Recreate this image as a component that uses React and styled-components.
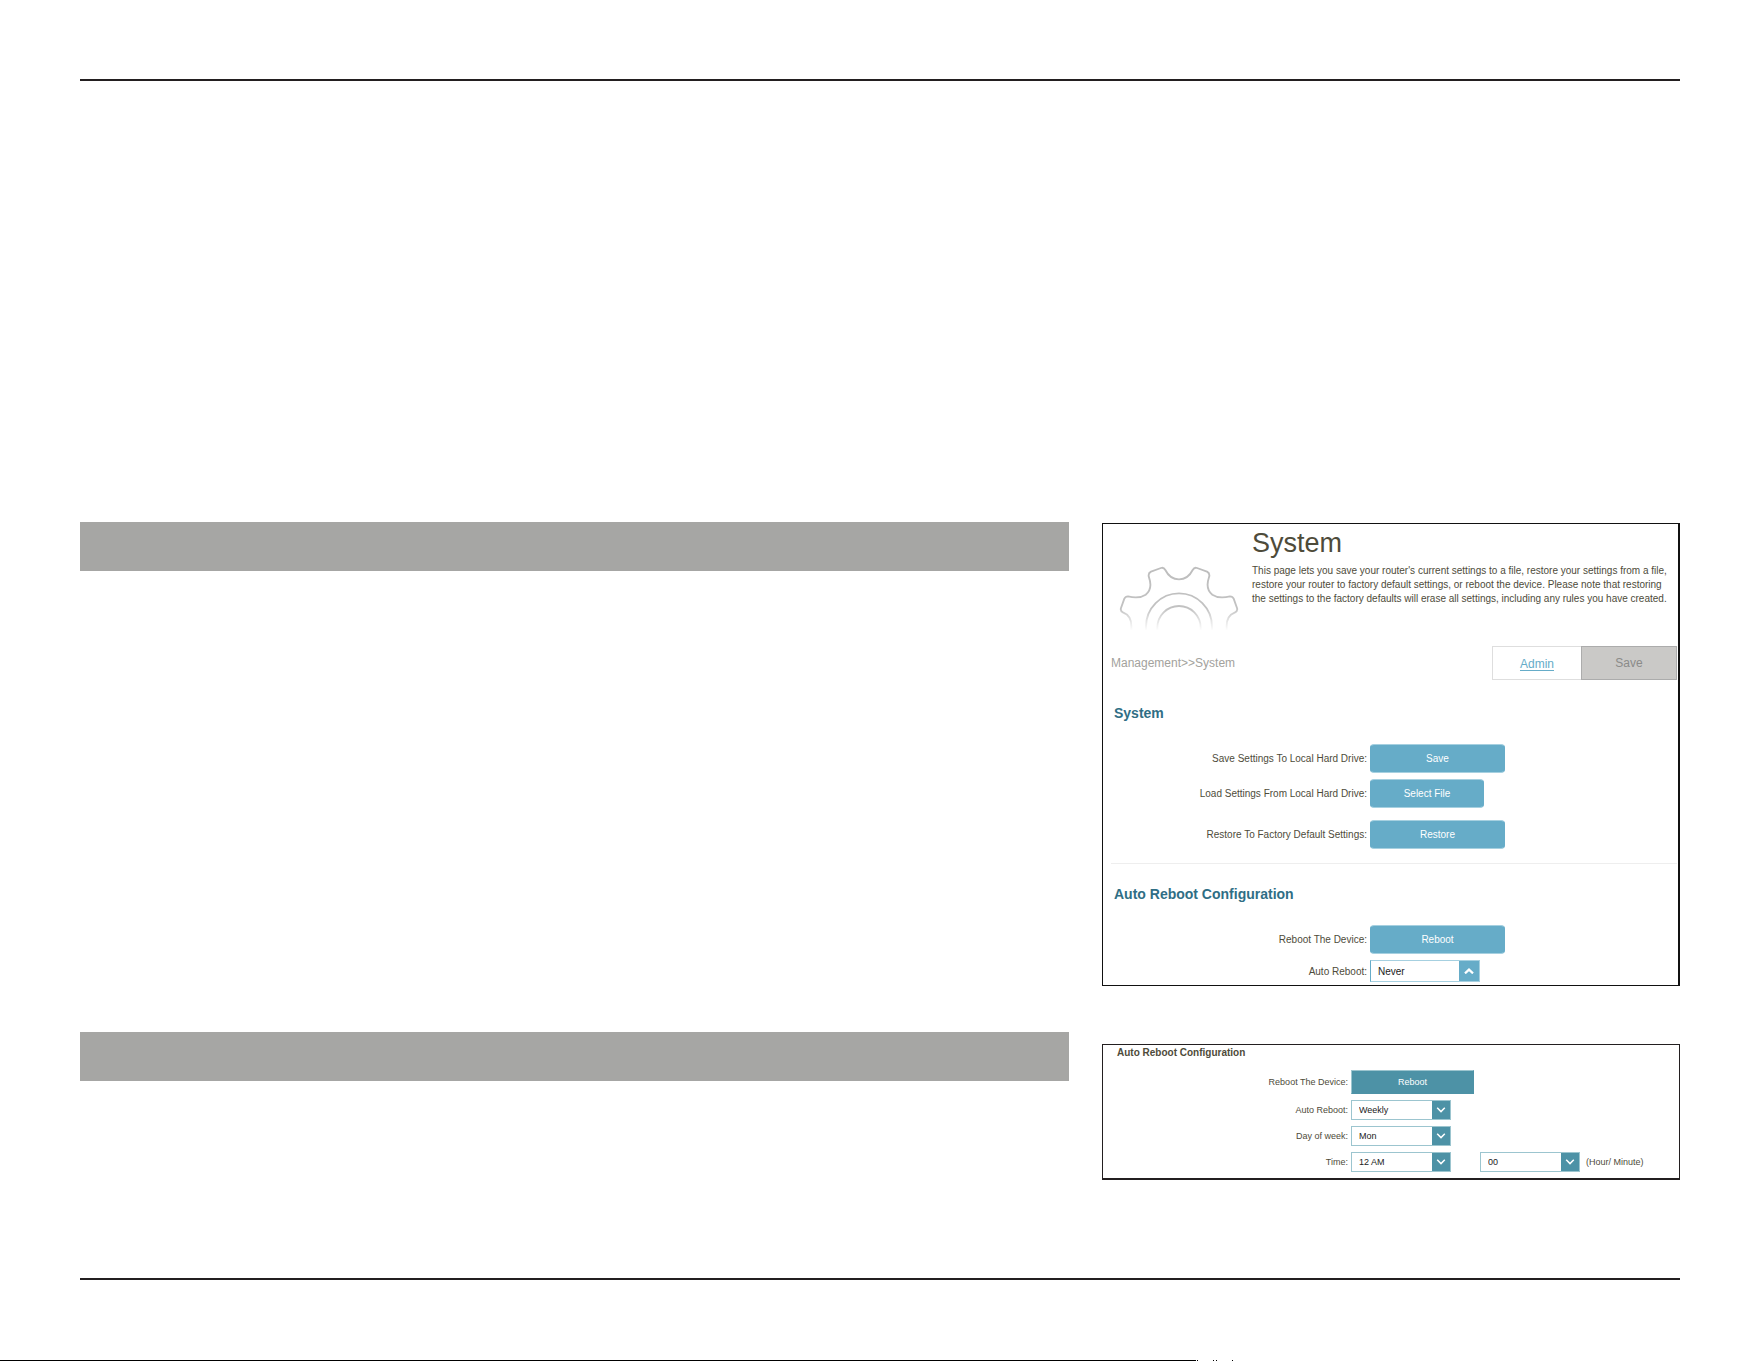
import React from 'react';
import styled, { createGlobalStyle } from 'styled-components';

/* ===== COLORS ===== */
const WHITE = '#FFFFFF';
const INK = '#231F20';
const BAR_GRAY = '#A6A6A4';
const TEXT_OLIVE = '#4E4B3A';
const TEXT_MUTED = '#A3A29D';
const BLUE = '#66ACC8';
const BLUE_LIGHT = '#A6D0E0';
const TEAL = '#4D92A6';
const TEAL_LIGHT = '#9CC5CF';
const TEAL_DARK = '#2F6E85';

const GlobalStyle = createGlobalStyle`
  * {
    box-sizing: border-box;
  }

  body {
    margin: 0;
    background-color: ${WHITE};
    color: ${TEXT_OLIVE};
    font-family: "Liberation Sans", Arial, sans-serif;
  }
`;

/* ===== PAGE ===== */

const Page = styled.div`
  min-height: 100vh;
  display: flex;
  flex-direction: column;
`;

const Sheet = styled.main`
  margin: 79px 81px 0 80px;
  display: flex;
  flex-direction: column;
`;

const Rule = styled.hr`
  width: 100%;
  height: 2px;
  margin: 0;
  border: none;
  background-color: ${INK};
`;

const Content = styled.div`
  display: grid;
  grid-template-columns: 989fr 578fr;
  gap: 46px 33px;
  align-items: start;
  padding: 441px 0 98px;
`;

const SectionBar = styled.div`
  height: 49px;
  background-color: ${BAR_GRAY};
`;

const BottomEdge = styled.div`
  margin-top: auto;
  display: flex;
  height: 1px;
`;

const EdgeLine = styled.div`
  width: 67.9%;
  background-color: #000000;
`;

/* ===== PANELS ===== */

const Panel = styled.section`
  margin-top: ${({ $top }) => $top}px;
  border: 1px solid ${INK};
`;

const SystemPanel = styled(Panel)`
  border-color: #111111;
  border-right-width: 2px;
  padding-bottom: 3px;
`;

const RebootPanel = styled(Panel)`
  border-bottom-width: 2px;
  padding-bottom: 6px;
`;

const Intro = styled.header`
  display: flex;
  height: 122px;
  padding-left: 16px;
`;

const Gear = styled.svg`
  flex: none;
  width: 120px;
  height: 66px;
  margin: 41px 13px 0 0;
`;

const Title = styled.h1`
  margin: 3px 0 5px;
  font-size: 27px;
  line-height: 32px;
  font-weight: 400;
`;

const Description = styled.p`
  margin: 0;
  font-size: 10px;
  line-height: 14px;
  white-space: nowrap;
`;

const Toolbar = styled.div`
  display: flex;
  align-items: center;
  padding: 0 1px 0 8px;
  font-size: 12px;
`;

const Breadcrumb = styled.span`
  margin-right: auto;
  color: ${TEXT_MUTED};
`;

const AdminLink = styled.a`
  width: 89px;
  height: 34px;
  line-height: 34px;
  border: 1px solid #DEDEDE;
  border-right: none;
  color: ${BLUE};
  text-align: center;
  text-underline-offset: 2px;
`;

const SaveButton = styled.button`
  width: 96px;
  height: 34px;
  padding: 0;
  border: 1px solid #ACACAC;
  background-color: #CAC9C7;
  color: #8B8B89;
  font: inherit;
`;

const Heading = styled.h2`
  margin: 0;
  padding: ${({ $top }) => $top}px 0 22px 11px;
  font-size: 14px;
  line-height: 17px;
  color: ${TEAL_DARK};
`;

const SmallHeading = styled.h2`
  margin: 0;
  padding: 2px 0 11px 14px;
  font-size: 10px;
  line-height: 12px;
`;

const Divider = styled.hr`
  height: 1px;
  margin: 14px 1px 0 8px;
  border: none;
  background-color: #EEEEEE;
`;

/* ===== FORM ===== */

const Form = styled.div`
  display: flex;
  flex-direction: column;
  gap: 6px;
  font-size: ${({ $size }) => $size}px;
`;

const Row = styled.div`
  display: grid;
  grid-template-columns: ${({ $columns }) => $columns};
  align-items: center;
`;

const SpacedRow = styled(Row)`
  margin-top: 6px;
`;

const Label = styled.label`
  padding-right: 3px;
  text-align: right;
  white-space: nowrap;
`;

const Field = styled.div`
  display: flex;
  align-items: center;
`;

const BlueButton = styled.button`
  width: ${({ $narrow }) => ($narrow ? 114 : 135)}px;
  height: 29px;
  padding: 0;
  border: 1px solid ${BLUE};
  border-top-color: ${BLUE_LIGHT};
  border-bottom-color: ${BLUE_LIGHT};
  border-radius: 4px;
  background-color: ${BLUE};
  color: ${WHITE};
  font-family: inherit;
  font-size: 10px;
`;

const TealButton = styled.button`
  width: 123px;
  height: 24px;
  padding: 0;
  border: 1px solid ${TEAL};
  border-top-color: ${TEAL_LIGHT};
  border-left-color: ${TEAL_LIGHT};
  background-color: ${TEAL};
  color: ${WHITE};
  font: inherit;
`;

const SelectBox = styled.div`
  position: relative;
  width: ${({ $blue }) => ($blue ? 110 : 100)}px;
  height: ${({ $blue }) => ($blue ? 22 : 20)}px;
  border: 1px solid ${({ $blue }) => ($blue ? BLUE_LIGHT : TEAL_LIGHT)};
  border-left-color: ${({ $blue }) => ($blue ? BLUE : TEAL_LIGHT)};
`;

const NativeSelect = styled.select`
  display: block;
  width: 100%;
  height: 100%;
  padding: 0 24px 0 7px;
  border: none;
  border-radius: 0;
  appearance: none;
  background-color: ${WHITE};
  color: #222222;
  font: inherit;
`;

const Arrow = styled.span`
  position: absolute;
  top: 0;
  right: 0;
  bottom: 0;
  width: ${({ $blue }) => ($blue ? 20 : 18)}px;
  display: flex;
  align-items: center;
  justify-content: center;
  background-color: ${({ $blue }) => ($blue ? BLUE : TEAL)};
  pointer-events: none;
`;

const MinuteField = styled.div`
  display: flex;
  align-items: center;
  gap: 6px;
  margin-left: 29px;
`;

/* ===== COMPONENTS ===== */

const WIDE_COLUMNS = '267fr 308fr';
const SMALL_COLUMNS = '248fr 328fr';

const GearIcon = () => (
  <Gear viewBox="87 165 360 198" fill="none" aria-hidden="true">
    <defs>
      <linearGradient id="gearFade" gradientUnits="userSpaceOnUse" x1="0" y1="170" x2="0" y2="362">
        <stop offset="0" stopColor="#BDBDBD" />
        <stop offset="0.65" stopColor="#C2C2C2" />
        <stop offset="1" stopColor="#FFFFFF" />
      </linearGradient>
    </defs>
    <g stroke="url(#gearFade)" strokeWidth="5.5" strokeLinejoin="round">
      <path d="M124 360V348C124 330 116 314 100 308Q90 303 93 294L103 266Q106 259 114 259C130 263 152 264 167 254C182 242 184 222 177 202Q173 190 183 185L213 174Q221 171 226 180C234 196 248 208 267 208C286 208 300 196 308 180Q313 171 321 174L351 185Q361 190 357 202C350 222 352 242 367 254C382 264 404 263 420 259Q428 259 431 266L441 294Q444 303 434 308C418 314 410 330 410 348V360" />
      <path d="M168 360V350A99 100 0 0 1 366 350V360" />
      <path d="M202 360V353A65 65 0 0 1 332 353V360" />
    </g>
  </Gear>
);

const Select = ({ id, value, options, blue, label }) => (
  <SelectBox $blue={blue}>
    <NativeSelect id={id} defaultValue={value} aria-label={label}>
      {options.map((option) => (
        <option key={option}>{option}</option>
      ))}
    </NativeSelect>
    <Arrow $blue={blue}>
      <svg width="10" height="6" viewBox="0 0 10 6" fill="none" stroke={WHITE} strokeWidth={blue ? 2.2 : 1.5}>
        <path d={blue ? 'M1 5.4L5 1.6L9 5.4' : 'M1.2 0.8L5 4.6L8.8 0.8'} />
      </svg>
    </Arrow>
  </SelectBox>
);

const SystemSettings = () => (
  <SystemPanel $top={1}>
    <Intro>
      <GearIcon />
      <div>
        <Title>System</Title>
        <Description>
          This page lets you save your router's current settings to a file, restore your settings from a file,
          <br />
          restore your router to factory default settings, or reboot the device. Please note that restoring
          <br />
          the settings to the factory defaults will erase all settings, including any rules you have created.
        </Description>
      </div>
    </Intro>

    <Toolbar>
      <Breadcrumb>Management&gt;&gt;System</Breadcrumb>
      <AdminLink href="#admin">Admin</AdminLink>
      <SaveButton type="button">Save</SaveButton>
    </Toolbar>

    <Heading $top={25}>System</Heading>
    <Form $size={10}>
      <Row $columns={WIDE_COLUMNS}>
        <Label htmlFor="save">Save Settings To Local Hard Drive:</Label>
        <BlueButton id="save" type="button">Save</BlueButton>
      </Row>
      <Row $columns={WIDE_COLUMNS}>
        <Label htmlFor="load">Load Settings From Local Hard Drive:</Label>
        <BlueButton id="load" type="button" $narrow>Select File</BlueButton>
      </Row>
      <SpacedRow $columns={WIDE_COLUMNS}>
        <Label htmlFor="restore">Restore To Factory Default Settings:</Label>
        <BlueButton id="restore" type="button">Restore</BlueButton>
      </SpacedRow>
    </Form>

    <Divider />

    <Heading $top={22}>Auto Reboot Configuration</Heading>
    <Form $size={10}>
      <Row $columns={WIDE_COLUMNS}>
        <Label htmlFor="reboot">Reboot The Device:</Label>
        <BlueButton id="reboot" type="button">Reboot</BlueButton>
      </Row>
      <Row $columns={WIDE_COLUMNS}>
        <Label htmlFor="autoReboot">Auto Reboot:</Label>
        <Select id="autoReboot" value="Never" options={['Never', 'Daily', 'Weekly']} blue />
      </Row>
    </Form>
  </SystemPanel>
);

const RebootSchedule = () => (
  <RebootPanel $top={12}>
    <SmallHeading>Auto Reboot Configuration</SmallHeading>
    <Form $size={9}>
      <Row $columns={SMALL_COLUMNS}>
        <Label htmlFor="rebootNow">Reboot The Device:</Label>
        <TealButton id="rebootNow" type="button">Reboot</TealButton>
      </Row>
      <Row $columns={SMALL_COLUMNS}>
        <Label htmlFor="frequency">Auto Reboot:</Label>
        <Select id="frequency" value="Weekly" options={['Never', 'Daily', 'Weekly']} />
      </Row>
      <Row $columns={SMALL_COLUMNS}>
        <Label htmlFor="day">Day of week:</Label>
        <Select id="day" value="Mon" options={['Mon', 'Tue', 'Wed', 'Thu', 'Fri', 'Sat', 'Sun']} />
      </Row>
      <Row $columns={SMALL_COLUMNS}>
        <Label htmlFor="hour">Time:</Label>
        <Field>
          <Select id="hour" value="12 AM" options={['12 AM', '6 AM', '12 PM', '6 PM']} />
          <MinuteField>
            <Select value="00" options={['00', '15', '30', '45']} label="Minute" />
            <span>(Hour/ Minute)</span>
          </MinuteField>
        </Field>
      </Row>
    </Form>
  </RebootPanel>
);

const App = () => {
  return (
    <Page>
      <GlobalStyle />
      <Sheet>
        <Rule />
        <Content>
          <SectionBar />
          <SystemSettings />
          <SectionBar />
          <RebootSchedule />
        </Content>
        <Rule />
      </Sheet>
      <BottomEdge>
        <EdgeLine />
        <svg width="40" height="1" viewBox="0 0 40 1" aria-hidden="true">
          <path d="M1 0h1v1h-1zM17 0h1v1h-1zM20 0h1v1h-1zM36 0h1v1h-1z" />
        </svg>
      </BottomEdge>
    </Page>
  );
};

export default App;
